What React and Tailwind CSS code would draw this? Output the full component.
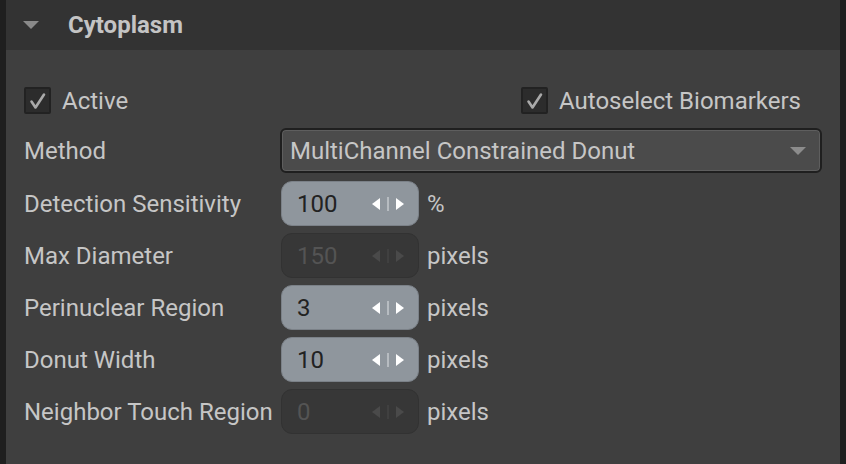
import React from "react";

const Check = ({ label }) => (
  <label className="flex h-[27px] items-center gap-[11px]">
    <span className="flex h-[27px] w-[27px] items-center justify-center rounded-[2px] border-2 border-[#222222] bg-[#2c2c2c]">
      <svg width="18" height="18" viewBox="0 0 18 18">
        <path d="M2.5 9.5 L6.5 15.5 L15 2.5" fill="none" stroke="#a9a9a9" strokeWidth="2.6" strokeLinecap="round" strokeLinejoin="round" />
      </svg>
    </span>
    <span>{label}</span>
  </label>
);

const Spin = ({ value, disabled }) => (
  <div
    className={`flex h-[45px] w-[138px] items-center rounded-[11px] border pl-[15px] pr-[12px] ${
      disabled ? "border-[#323232] bg-[#373737] text-[#545454]" : "border-[#7b8188] bg-[#8f969d] text-[#222222]"
    }`}
  >
    <span className="flex-1">{value}</span>
    <svg width="36" height="18" viewBox="0 0 36 18">
      <path d="M10 3 L2 9 L10 15 Z" fill={disabled ? "#4a4a4a" : "#ffffff"} />
      <rect x="17.5" y="2" width="1" height="14" fill={disabled ? "#4a4a4a" : "#dfe2e5"} />
      <path d="M26 3 L34 9 L26 15 Z" fill={disabled ? "#4a4a4a" : "#ffffff"} />
    </svg>
  </div>
);

const rows = [
  { label: "Detection Sensitivity", value: "100", unit: "%" },
  { label: "Max Diameter", value: "150", unit: "pixels", disabled: true },
  { label: "Perinuclear Region", value: "3", unit: "pixels" },
  { label: "Donut Width", value: "10", unit: "pixels" },
  { label: "Neighbor Touch Region", value: "0", unit: "pixels", disabled: true },
];

export default function App() {
  return (
    <div
      className="flex h-[464px] w-[846px] bg-[#1f1f1f] px-[6px] text-[24px] leading-none text-[#c6c6c6]"
      style={{ fontFamily: "Roboto, 'Noto Sans', sans-serif" }}
    >
      <div className="flex flex-1 flex-col bg-[#3f3f3f]">
        {/* header */}
        <div className="flex h-[50px] items-center bg-[#333333] pl-[17px]">
          <svg width="16" height="8" viewBox="0 0 16 8">
            <path d="M0 0 L16 0 L8 8 Z" fill="#8a8a8a" />
          </svg>
          <span className="ml-[29px] text-[24px] font-bold text-[#c4c4c4]">Cytoplasm</span>
        </div>

        <div className="flex flex-col px-[18px] pt-[37px]">
          <div className="flex items-center justify-between pr-[21px]">
            <Check label="Active" />
            <Check label="Autoselect Biomarkers" />
          </div>

          <div className="mt-[14px] flex h-[45px] items-center">
            <span className="w-[256px]">Method</span>
            <div className="flex h-[45px] flex-1 items-center rounded-[6px] border-2 border-[#1f1f1f] bg-[#4b4b4b] pl-[8px] pr-[14px] shadow-[inset_0_0_0_1px_#5e5e5e]">
              <span className="flex-1">MultiChannel Constrained Donut</span>
              <svg width="16" height="8" viewBox="0 0 16 8">
                <path d="M0 0 L16 0 L8 8 Z" fill="#8c8c8c" />
              </svg>
            </div>
          </div>

          <div className="mt-[8px] flex flex-col gap-[7px]">
            {rows.map((r) => (
              <div key={r.label} className="flex h-[45px] items-center">
                <span className="w-[257px] whitespace-nowrap">{r.label}</span>
                <Spin value={r.value} disabled={r.disabled} />
                <span className="ml-[8px]">{r.unit}</span>
              </div>
            ))}
          </div>
        </div>
      </div>
    </div>
  );
}
